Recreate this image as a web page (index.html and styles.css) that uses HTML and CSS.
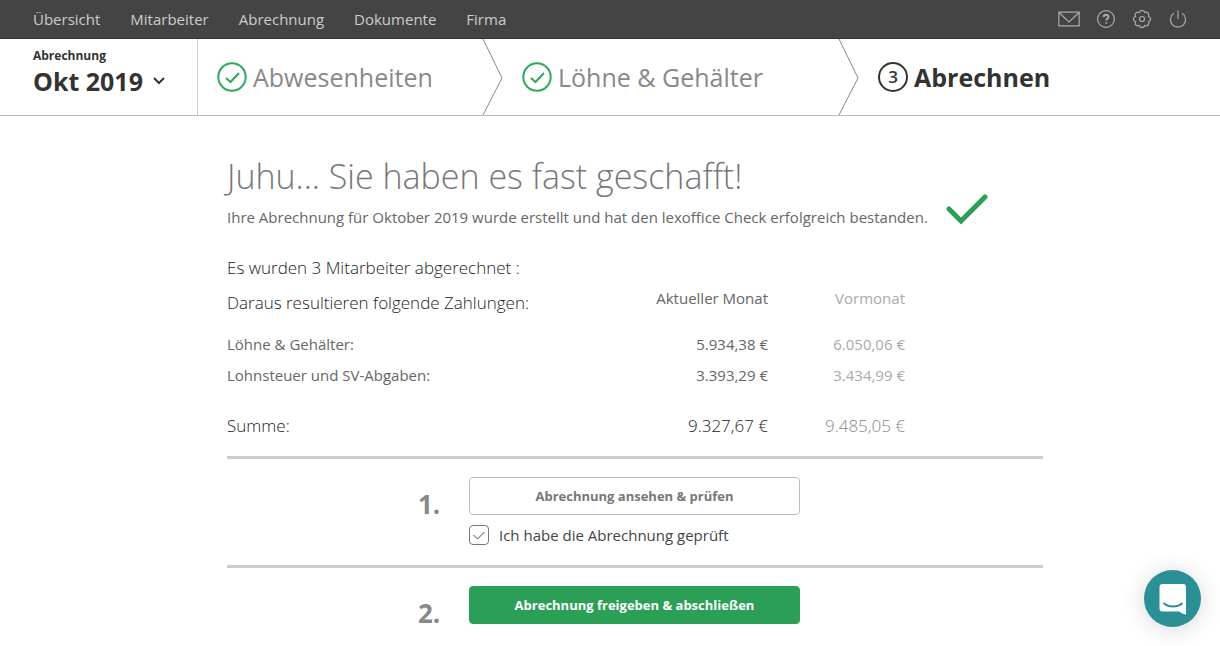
FILE: index.html
```html
<!DOCTYPE html>
<html lang="de">
<head>
<meta charset="utf-8">
<meta name="viewport" content="width=device-width, initial-scale=1">
<title>Abrechnung Oktober 2019</title>
<link rel="stylesheet" href="styles.css">
</head>
<body>
<header class="topbar">
  <nav class="menu" aria-label="Hauptmenü">
    <a href="#">Übersicht</a>
    <a href="#">Mitarbeiter</a>
    <a href="#">Abrechnung</a>
    <a href="#">Dokumente</a>
    <a href="#">Firma</a>
  </nav>
  <div class="tools">
    <button class="tool" type="button" aria-label="Nachrichten">
      <svg width="22" height="20" viewBox="0 0 22 20"><path d="M.8 3.2h20.4v13.6H.8zM1 3.500l10 9.500L21 3.500"/></svg>
    </button>
    <button class="tool" type="button" aria-label="Hilfe">
      <svg width="20" height="20" viewBox="0 0 20 20"><circle cx="10" cy="10" r="8.400"/><path class="bold" d="M7.700 8.100c0-1.400 1-2.300 2.400-2.300s2.300.9 2.300 2.100c0 1.700-2.200 1.800-2.200 3.600M10.200 13.200v1.600"/></svg>
    </button>
    <button class="tool" type="button" aria-label="Einstellungen">
      <svg width="20" height="20" viewBox="0 0 20 20"><path d="M7.300 3.500A2.800 2.800 0 0 1 12.700 3.500A2.800 2.800 0 0 1 16.500 7.300A2.800 2.800 0 0 1 16.500 12.700A2.800 2.800 0 0 1 12.700 16.500A2.800 2.800 0 0 1 7.300 16.500A2.800 2.800 0 0 1 3.500 12.700A2.800 2.800 0 0 1 3.500 7.300A2.800 2.800 0 0 1 7.300 3.500z"/><circle cx="10" cy="10" r="2.500"/></svg>
    </button>
    <button class="tool" type="button" aria-label="Abmelden">
      <svg width="20" height="20" viewBox="0 0 20 20"><path d="M10 1.500v8.500M5.800 4.200a7.600 7.600 0 1 0 8.400 0"/></svg>
    </button>
  </div>
</header>

<div class="stepbar">
  <button class="period" type="button">
    <span class="period-label">Abrechnung</span>
    <span class="period-value">Okt 2019
      <svg width="12" height="8" viewBox="0 0 12 8"><path d="M1 1l5 5 5-5"/></svg>
    </span>
  </button>
  <ol class="steps">
    <li class="step step-absence">
      <svg class="step-icon" width="30" height="30" viewBox="0 0 30 30"><circle cx="15" cy="15" r="13.700"/><path d="M9 16l4.500 4L22 11"/></svg>
      <a href="#">Abwesenheiten</a>
      <svg class="divider" width="22" height="76" viewBox="0 0 22 76"><path d="M2 0l19 39L2 76"/></svg>
    </li>
    <li class="step step-wages">
      <svg class="step-icon" width="30" height="30" viewBox="0 0 30 30"><circle cx="15" cy="15" r="13.700"/><path d="M9 16l4.500 4L22 11"/></svg>
      <a href="#">Löhne &amp; Gehälter</a>
      <svg class="divider" width="22" height="76" viewBox="0 0 22 76"><path d="M2 0l19 39L2 76"/></svg>
    </li>
    <li class="step step-current" aria-current="step">
      <span class="step-number">3</span>
      <a href="#">Abrechnen</a>
    </li>
  </ol>
</div>

<main class="content">
  <h1>Juhu... Sie haben es fast geschafft!</h1>
  <p class="result">Ihre Abrechnung für Oktober 2019 wurde erstellt und hat den lexoffice Check erfolgreich bestanden.
    <svg width="42" height="32" viewBox="0 0 42 32"><path d="M3 16l12 12L39 4"/></svg>
  </p>
  <p class="count">Es wurden 3 Mitarbeiter abgerechnet :</p>
  <table class="payments">
    <thead>
      <tr><th class="intro" scope="col">Daraus resultieren folgende Zahlungen:</th><th scope="col">Aktueller Monat</th><th class="previous" scope="col">Vormonat</th></tr>
    </thead>
    <tbody>
      <tr><th scope="row">Löhne &amp; Gehälter:</th><td>5.934,38 €</td><td class="previous">6.050,06 €</td></tr>
      <tr><th scope="row">Lohnsteuer und SV-Abgaben:</th><td>3.393,29 €</td><td class="previous">3.434,99 €</td></tr>
    </tbody>
    <tfoot>
      <tr><th scope="row">Summe:</th><td>9.327,67 €</td><td class="previous">9.485,05 €</td></tr>
    </tfoot>
  </table>
  <section class="task">
    <span class="task-number">1.</span>
    <div class="task-body">
      <button class="button" type="button">Abrechnung ansehen &amp; prüfen</button>
      <label class="check"><input type="checkbox" checked><svg width="20" height="20" viewBox="0 0 20 20"><path d="M4.500 10l4 4 7-7"/></svg><span>Ich habe die Abrechnung geprüft</span></label>
    </div>
  </section>
  <section class="task">
    <span class="task-number">2.</span>
    <div class="task-body">
      <button class="button button-primary" type="button">Abrechnung freigeben &amp; abschließen</button>
    </div>
  </section>
</main>

<button class="chat" type="button" aria-label="Chat öffnen">
  <svg width="28" height="32" viewBox="0 0 28 32"><path class="bubble" d="M3.500 1h20.500a3 3 0 0 1 3 3v27.500c-2.500-.5-5-1.500-7-3H3.500a3 3 0 0 1-3-3V4a3 3 0 0 1 3-3z"/><path class="smile" d="M5 20.500c5 4 13 4 18 0"/></svg>
</button>
</body>
</html>
```

FILE: styles.css
```css
* {
  box-sizing: border-box;
}

body {
  margin: 0;
  background: #fff;
  color: #444;
  font-family: "Open Sans", sans-serif;
  font-size: 15px;
  line-height: 24px;
}

a {
  color: inherit;
  text-decoration: none;
}

button {
  padding: 0;
  border: 0;
  background: none;
  color: inherit;
  font: inherit;
  cursor: pointer;
}

svg {
  fill: none;
  stroke: currentColor;
  flex: none;
}

.topbar {
  display: flex;
  justify-content: space-between;
  align-items: center;
  height: 39px;
  padding: 0 32px 0 33px;
  border-bottom: 1px solid #333;
  background: #444;
  color: #ccc;
}

.menu {
  display: flex;
  gap: 30px;
}

.tools {
  display: flex;
  gap: 16px;
  color: #aaa;
}

.tool {
  display: flex;
}

.tool svg {
  stroke-width: 1.2;
}

.tool .bold {
  stroke-width: 2;
}

.stepbar {
  display: flex;
  border-bottom: 1px solid #bbb;
}

.period {
  display: flex;
  flex-direction: column;
  width: 198px;
  padding: 8px 0 0 33px;
  border-right: 1px solid #ccc;
  color: #333;
  font-weight: 700;
  text-align: left;
}

.period-label {
  font-size: 12px;
  line-height: 18px;
}

.period-value {
  display: flex;
  align-items: center;
  gap: 10px;
  font-size: 25px;
  line-height: 32px;
}

.period-value svg {
  stroke-width: 2;
}

.steps {
  display: flex;
  margin: 0;
  padding: 0;
  list-style: none;
}

.step {
  display: flex;
  align-items: center;
  gap: 6px;
  height: 76px;
  padding-left: 19px;
  color: #888;
  font-size: 25px;
  line-height: 34px;
}

.step-absence {
  width: 305px;
}

.step-wages {
  width: 356px;
}

.step-current {
  color: #333;
  font-weight: 700;
}

.step-icon {
  color: #2fa75c;
  stroke-width: 2;
}

.step-number {
  display: flex;
  align-items: center;
  justify-content: center;
  width: 30px;
  height: 30px;
  border: 2px solid #333;
  border-radius: 50%;
  font-size: 17px;
  font-weight: 600;
}

.divider {
  margin-left: auto;
  color: #888;
}

.content {
  max-width: 1043px;
  padding: 35px 0 20px 227px;
}

h1 {
  margin: 0;
  color: #777;
  font-size: 34px;
  font-weight: 300;
  line-height: 50px;
}

.result {
  display: flex;
  align-items: center;
  gap: 18px;
  margin: 0;
  color: #666;
  line-height: 32px;
}

.result svg {
  align-self: flex-start;
  margin-top: -8px;
  color: #2c9f57;
  stroke-width: 5;
  stroke-linecap: round;
}

.count {
  margin: 23px 0 6px;
  color: #222;
  font-size: 17px;
  font-weight: 300;
}

.payments {
  width: 678px;
  border-collapse: collapse;
  color: #666;
}

.payments th,
.payments td {
  height: 31px;
  padding: 0;
  font-weight: 400;
  text-align: right;
}

.payments th:first-child {
  text-align: left;
}

.payments thead th {
  height: 42px;
  padding-bottom: 13px;
  vertical-align: top;
}

.payments thead .intro {
  padding-top: 5px;
  color: #222;
  font-size: 17px;
  font-weight: 300;
}

.payments .previous {
  width: 137px;
  color: #aaa;
}

.payments tfoot th,
.payments tfoot td {
  height: 66px;
  padding-top: 5px;
  color: #222;
  font-size: 17px;
  font-weight: 300;
}

.payments tfoot .previous {
  color: #888;
}

.task {
  display: flex;
  gap: 27px;
  padding: 18px 0 18px 191px;
  border-top: 3px solid #ccc;
}

.task-number {
  width: 24px;
  padding-top: 9px;
  color: #888;
  font-size: 26px;
  font-weight: 700;
  line-height: 36px;
}

.task-body {
  width: 331px;
}

.button {
  width: 100%;
  height: 38px;
  border: 1px solid #bbb;
  border-radius: 4px;
  color: #777;
  font-size: 13px;
  font-weight: 700;
}

.button-primary {
  border-color: #2c9f57;
  background: #2c9f57;
  color: #fff;
}

.check {
  display: grid;
  grid-template-columns: 20px 1fr;
  align-items: center;
  column-gap: 10px;
  margin-top: 8px;
}

.check input,
.check svg {
  grid-area: 1 / 1;
}

.check input {
  appearance: none;
  width: 20px;
  height: 20px;
  margin: 0;
  border: 1px solid #777;
  border-radius: 4px;
}

.check svg {
  pointer-events: none;
  visibility: hidden;
}

.check input:checked + svg {
  visibility: visible;
}

.chat {
  position: fixed;
  right: 19px;
  bottom: 19px;
  display: flex;
  align-items: center;
  justify-content: center;
  width: 57px;
  height: 57px;
  border-radius: 50%;
  background: #2b8f96;
  box-shadow: 0 2px 24px rgba(0, 0, 0, 0.16);
}

.chat .bubble {
  fill: #fff;
  stroke: none;
}

.chat .smile {
  stroke: #2b8f96;
  stroke-width: 2;
  stroke-linecap: round;
}
```
